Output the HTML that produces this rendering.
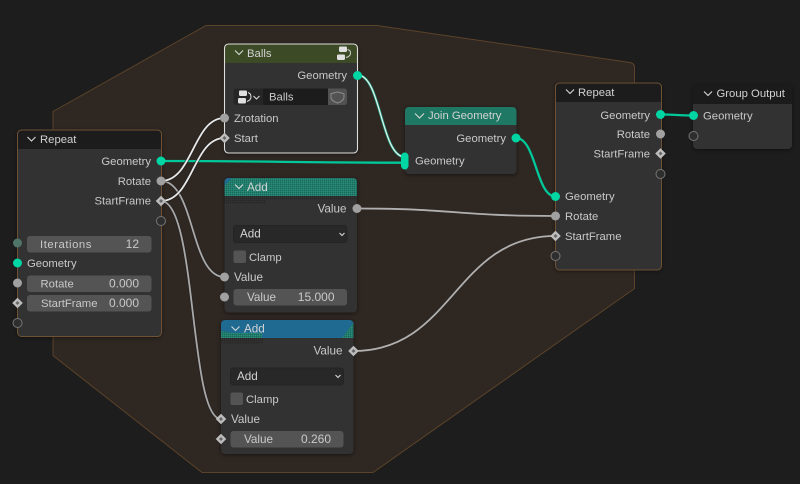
<!DOCTYPE html>
<html><head><meta charset="utf-8"><style>
html,body{margin:0;padding:0;background:#1d1d1d;width:800px;height:484px;overflow:hidden}
svg{display:block;font-family:"Liberation Sans",sans-serif;font-size:11.3px}
text{fill:#c9c9c9}
.e{text-anchor:end}
.h{fill:#d2d2d2}
.v{font-size:11.7px}
.n{font-size:12px}
.chev{fill:none;stroke:#d8d8d8;stroke-width:1.1}
.node{fill:#303030}
.fld{fill:#545454}
.gs{fill:#00d6a3}
.ns{fill:#a1a1a1}
.es{fill:#2e2e2e;stroke:#757575;stroke-width:1}
</style></head><body>
<svg width="800" height="484" viewBox="0 0 800 484" xmlns="http://www.w3.org/2000/svg">
<defs>
<symbol id="d" viewBox="-6 -6 12 12" overflow="visible">
<path d="M0,-5.300L5.300,0L0,5.300L-5.300,0Z" fill="#bdbdbd"/><path d="M0,-2L2,0L0,2L-2,0Z" fill="#666"/>
</symbol>
<pattern id="dith" width="2" height="2" patternUnits="userSpaceOnUse"><rect width="2" height="2" fill="#227c6b"/><rect width="1" height="1" fill="#1c6a5c"/><rect x="1" y="1" width="1" height="1" fill="#2a8c79"/></pattern>
<pattern id="dith2" width="2" height="2" patternUnits="userSpaceOnUse"><rect width="2" height="2" fill="#303030"/><rect width="1" height="1" fill="#262626"/></pattern>
<filter id="sh" x="-20%" y="-20%" width="140%" height="140%"><feDropShadow dx="0" dy="1" stdDeviation="2.500" flood-color="#000" flood-opacity=".5"/></filter>
<clipPath id="c1"><rect x="224.500" y="178" width="132.500" height="134.500" rx="4"/></clipPath>
<clipPath id="c2"><rect x="221" y="320" width="132.500" height="134" rx="4"/></clipPath>
<clipPath id="c3"><rect x="224.500" y="44" width="133" height="109" rx="4"/></clipPath>
<clipPath id="c4"><rect x="405" y="107" width="111.500" height="67" rx="4"/></clipPath>
<clipPath id="c5"><rect x="17.500" y="130" width="144" height="206.500" rx="4"/></clipPath>
<clipPath id="c6"><rect x="555.500" y="83" width="106" height="187" rx="4"/></clipPath>
<clipPath id="c7"><rect x="693" y="85" width="99" height="64" rx="4"/></clipPath>
</defs>
<rect width="800" height="484" fill="#1d1d1d"/>
<path d="M53,355.500 L53,111.500 L206,25.500 L377,25.500 L630,62.500 Q634.500,63.500 634.500,67 L634.500,288.500 L373,472.500 L202,472.500 Z" fill="#2f2722" stroke="#5b4329" stroke-width="1"/>

<!-- Repeat 1 -->
<g filter="url(#sh)"><rect x="17.500" y="130" width="144" height="206.500" rx="4" class="node"/></g>
<g clip-path="url(#c5)"><rect x="17" y="130" width="145" height="19" fill="#1c1c1c"/></g>
<rect x="17.500" y="130" width="144" height="206.500" rx="4" fill="none" stroke="#6e5233" stroke-width="1"/>
<path class="chev" d="M27.500,137 L31.500,141 L35.500,137"/>
<text x="40" y="143" class="h">Repeat</text>
<text x="151" y="165" class="e">Geometry</text>
<text x="151" y="185" class="e">Rotate</text>
<text x="151" y="204.500" class="e">StartFrame</text>
<rect x="27" y="236" width="124.500" height="16.500" rx="3" class="fld"/>
<text x="40" y="248" letter-spacing=".55">Iterations</text><text x="139" y="248" class="e n">12</text>
<text x="27" y="267">Geometry</text>
<rect x="27" y="275.500" width="124.500" height="16.500" rx="3" class="fld"/>
<text x="40.500" y="287.500">Rotate</text><text x="139" y="287.500" class="e n">0.000</text>
<rect x="27" y="295" width="124.500" height="16.500" rx="3" class="fld"/>
<text x="41" y="307">StartFrame</text><text x="139" y="307" class="e n">0.000</text>

<!-- Balls -->
<g filter="url(#sh)"><rect x="224.500" y="44" width="133" height="109" rx="4" class="node"/></g>
<g clip-path="url(#c3)"><rect x="224" y="44" width="134" height="19" fill="#3c4a25"/></g>
<rect x="224.500" y="44" width="133" height="109" rx="4" fill="none" stroke="#dedede" stroke-width="1.100"/>
<path class="chev" d="M235,50.500 L239,54.500 L243,50.500"/>
<text x="247" y="57" class="h">Balls</text>
<rect x="339" y="46.500" width="8" height="5.500" rx="1.200" fill="#e0e0e0"/><rect x="337" y="54.500" width="8" height="5.500" rx="1.200" fill="#e0e0e0"/>
<path d="M347.500,49.500 Q350.500,50 350.500,53 Q350.500,56.500 346,57.500" fill="none" stroke="#cfcfcf" stroke-width="1"/>
<text x="347" y="79" class="e">Geometry</text>
<rect x="233.500" y="88.500" width="113.500" height="16.500" rx="3" fill="#262626"/>
<rect x="263" y="88.500" width="65" height="16.500" fill="#1c1c1c"/>
<path d="M328,88.500 H344 Q347,88.500 347,91.500 V102 Q347,105 344,105 H328Z" fill="#525252"/>
<path d="M337.500,92 L344,93.800 V97 Q344,101 337.500,103 Q331,101 331,97 V93.800Z" fill="none" stroke="#8c8c8c" stroke-width="1"/>
<rect x="239" y="90.500" width="8" height="5.500" rx="1.200" fill="#e0e0e0"/><rect x="238" y="98" width="8" height="5.500" rx="1.200" fill="#e0e0e0"/>
<path d="M248,92.500 Q251,93.500 251,97 Q251,100 247,101.500" fill="none" stroke="#e0e0e0" stroke-width="1"/>
<path class="chev" d="M253.500,96 L256.500,99 L259.500,96"/>
<text x="269" y="100.500">Balls</text>
<text x="234" y="122">Zrotation</text>
<text x="234" y="142">Start</text>

<!-- Add 1 -->
<g filter="url(#sh)"><rect x="224.500" y="178" width="132.500" height="134.500" rx="4" class="node"/></g>
<g clip-path="url(#c1)">
<rect x="224" y="178" width="134" height="18" fill="url(#dith)"/>
<path d="M224,178 H232 L224,186Z" fill="#1f6a90"/>
<rect x="224" y="196" width="134" height="4" fill="url(#dith2)"/>
<rect x="224" y="200" width="42" height="4" fill="url(#dith2)"/>
</g>
<path class="chev" d="M235,184.500 L239,188.500 L243,184.500"/>
<text x="247" y="191" class="h v">Add</text>
<text x="346.500" y="212.500" class="e v">Value</text>
<rect x="233.500" y="225.500" width="113.500" height="17" rx="3" fill="#282828" stroke="#242424"/>
<text x="240" y="237.500" class="h v">Add</text>
<path class="chev" d="M339.500,233 L342,235.500 L344.500,233"/>
<rect x="233.500" y="250.500" width="12.500" height="12.500" rx="2" class="fld"/>
<text x="249" y="261">Clamp</text>
<text x="234" y="281" class="v">Value</text>
<rect x="233.500" y="289" width="113.500" height="16.500" rx="3" class="fld"/>
<text x="247" y="301" class="v">Value</text><text x="334.500" y="301" class="e n">15.000</text>

<!-- Add 2 -->
<g filter="url(#sh)"><rect x="221" y="320" width="132.500" height="134" rx="4" class="node"/></g>
<g clip-path="url(#c2)">
<rect x="221" y="320" width="133" height="18" fill="#1f6a90"/>
<path d="M221,338 V331 L232,333 H262 V338Z" fill="url(#dith)"/>
<path d="M354,322 V338 H342Z" fill="url(#dith)"/>
<rect x="221" y="338" width="42" height="6" fill="url(#dith2)"/>
</g>
<path class="chev" d="M231.500,326.500 L235.500,330.500 L239.500,326.500"/>
<text x="244" y="332.500" class="h v">Add</text>
<text x="342.500" y="354.500" class="e v">Value</text>
<rect x="230.500" y="368" width="113" height="17" rx="3" fill="#282828" stroke="#242424"/>
<text x="237" y="380" class="h v">Add</text>
<path class="chev" d="M335.500,375 L338,377.500 L340.500,375"/>
<rect x="230.500" y="392.500" width="12.500" height="12.500" rx="2" class="fld"/>
<text x="246" y="403">Clamp</text>
<text x="231" y="423" class="v">Value</text>
<rect x="230.500" y="431" width="113" height="16.500" rx="3" class="fld"/>
<text x="244" y="443" class="v">Value</text><text x="331" y="443" class="e n">0.260</text>

<!-- Join -->
<g filter="url(#sh)"><rect x="405" y="107" width="111.500" height="67" rx="4" class="node"/></g>
<g clip-path="url(#c4)"><rect x="405" y="107" width="112" height="18" fill="#1f7864"/></g>
<path class="chev" d="M415,113.500 L419.500,118 L424,113.500"/>
<text x="428" y="119" class="h">Join Geometry</text>
<text x="506" y="142" class="e">Geometry</text>
<text x="415" y="164.500">Geometry</text>

<!-- Repeat 2 -->
<g filter="url(#sh)"><rect x="555.500" y="83" width="106" height="187" rx="4" class="node"/></g>
<g clip-path="url(#c6)"><rect x="555" y="83" width="107" height="19" fill="#1c1c1c"/></g>
<rect x="555.500" y="83" width="106" height="187" rx="4" fill="none" stroke="#6e5233" stroke-width="1"/>
<path class="chev" d="M566,89.500 L570,93.500 L574,89.500"/>
<text x="578" y="96" class="h">Repeat</text>
<text x="650" y="119" class="e">Geometry</text>
<text x="650" y="138" class="e">Rotate</text>
<text x="650" y="157.500" class="e">StartFrame</text>
<text x="565" y="200">Geometry</text>
<text x="565" y="220">Rotate</text>
<text x="565" y="240">StartFrame</text>

<!-- Group Output -->
<g filter="url(#sh)"><rect x="693" y="85" width="99" height="64" rx="4" class="node"/></g>
<g clip-path="url(#c7)"><rect x="693" y="85" width="99" height="19" fill="#1b1b1b"/></g>
<path class="chev" d="M704,91.500 L708,95.500 L712,91.500"/>
<text x="716.500" y="97" class="h">Group Output</text>
<text x="703" y="119.500">Geometry</text>

<!-- Links -->
<g fill="none" stroke-linecap="round">
<path d="M161,181 C195,181 190,277 224.500,277" stroke="#1f1f1f" stroke-width="3.500" opacity=".5"/>
<path d="M161,181 C195,181 190,277 224.500,277" stroke="#a8a8a8" stroke-width="1.800"/>
<path d="M161,201 C197,201 189,419 221,419" stroke="#1f1f1f" stroke-width="3.500" opacity=".5"/>
<path d="M161,201 C197,201 189,419 221,419" stroke="#a8a8a8" stroke-width="1.800"/>
<path d="M357,208.500 C456,208.500 456,216 555.500,216" stroke="#b0b0b0" stroke-width="1.800"/>
<path d="M353.500,351 C454,351 454,236 555.500,236" stroke="#b0b0b0" stroke-width="1.800"/>
<path d="M161,161 C283,161 283,162.700 405,162.700" stroke="#00c89a" stroke-width="2.300"/>
<path d="M161,181 C193,181 193,118 224.500,118" stroke="#1f1f1f" stroke-width="3.500" opacity=".6"/>
<path d="M161,181 C193,181 193,118 224.500,118" stroke="#e8e8e8" stroke-width="1.800"/>
<path d="M161,201 C193,201 193,138 224.500,138" stroke="#1f1f1f" stroke-width="3.500" opacity=".6"/>
<path d="M161,201 C193,201 193,138 224.500,138" stroke="#e8e8e8" stroke-width="1.800"/>
<path d="M357.500,75 C381,75 381,157 405,157" stroke="#1fa888" stroke-width="2.500"/>
<path d="M357.500,75 C381,75 381,157 405,157" stroke="#e4efec" stroke-width="1.200"/>
<path d="M516,138 C536,138 536,196.500 555.500,196.500" stroke="#00c89a" stroke-width="2.300"/>
<path d="M661,114.500 C677,114.500 677,115.500 693,115.500" stroke="#00c89a" stroke-width="2.300"/>
</g>

<!-- Sockets -->
<circle cx="161" cy="161" r="4.500" class="gs"/>
<circle cx="161" cy="181" r="4.500" class="ns"/>
<use href="#d" x="155" y="195" width="12" height="12"/>
<circle cx="161" cy="221" r="4.500" class="es"/>
<circle cx="17.500" cy="243" r="4.500" fill="#4f7568"/>
<circle cx="17.500" cy="263" r="4.500" class="gs"/>
<circle cx="17.500" cy="283" r="4.500" class="ns"/>
<use href="#d" x="11.500" y="297" width="12" height="12"/>
<circle cx="17.500" cy="323" r="4.500" class="es"/>
<circle cx="357.500" cy="75.500" r="4.500" class="gs"/>
<circle cx="224.500" cy="118" r="4.500" class="ns"/>
<use href="#d" x="218.500" y="132" width="12" height="12"/>
<circle cx="357" cy="208.500" r="4.500" class="ns"/>
<circle cx="224.500" cy="277" r="4.500" class="ns"/>
<circle cx="224.500" cy="297" r="4.500" class="ns"/>
<use href="#d" x="347.500" y="345" width="12" height="12"/>
<use href="#d" x="215" y="413" width="12" height="12"/>
<use href="#d" x="215" y="433" width="12" height="12"/>
<circle cx="516" cy="138" r="4.500" class="gs"/>
<rect x="401" y="152.500" width="7.500" height="17" rx="3.700" class="gs"/>
<circle cx="660.500" cy="114.500" r="4.500" class="gs"/>
<circle cx="660.500" cy="134" r="4.500" class="ns"/>
<use href="#d" x="654.500" y="147.500" width="12" height="12"/>
<circle cx="660.500" cy="174" r="4.500" class="es"/>
<circle cx="555.500" cy="196.500" r="4.500" class="gs"/>
<circle cx="555.500" cy="216" r="4.500" class="ns"/>
<use href="#d" x="549.500" y="230" width="12" height="12"/>
<circle cx="555.500" cy="256" r="4.500" class="es"/>
<circle cx="693.500" cy="115.500" r="4.500" class="gs"/>
<circle cx="693.500" cy="136" r="4.500" class="es"/>
</svg>
</body></html>
